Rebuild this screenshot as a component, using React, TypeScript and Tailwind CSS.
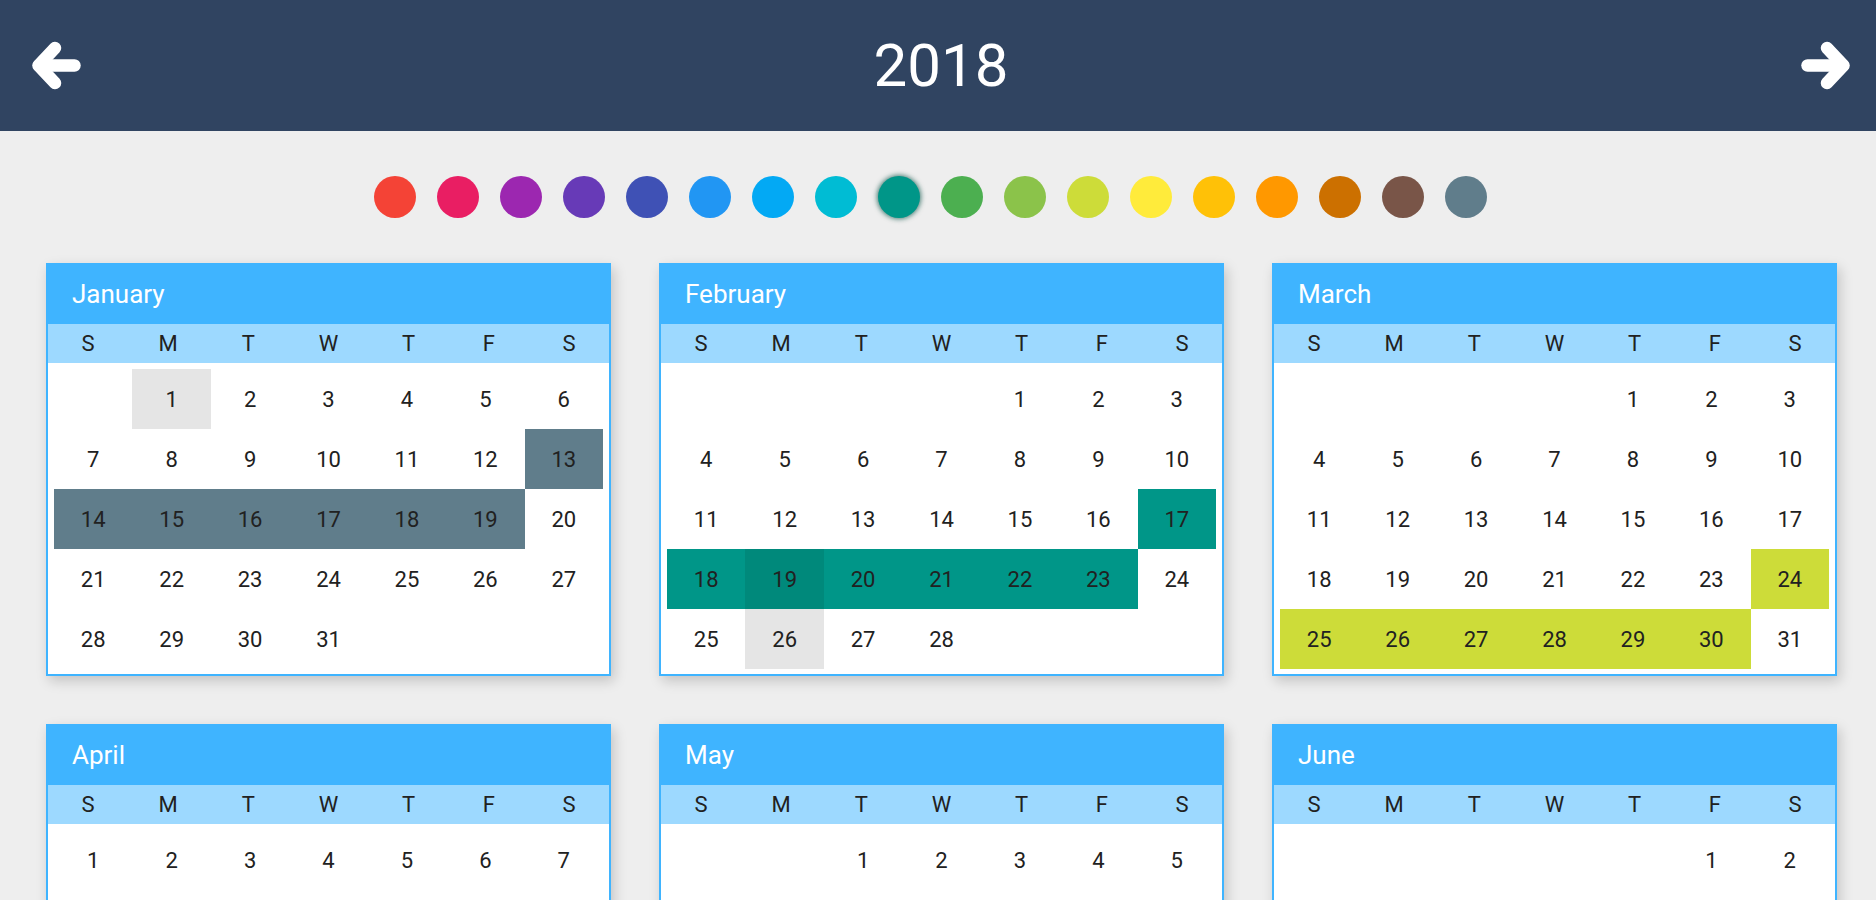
import React from "react";

const MONTHS = [
  "January", "February", "March", "April", "May", "June",
  "July", "August", "September", "October", "November", "December",
];
const WEEKDAYS = ["S", "M", "T", "W", "T", "F", "S"];

const SWATCHES = [
  "bg-[#f44336]", "bg-[#e91e63]", "bg-[#9c27b0]", "bg-[#673ab7]", "bg-[#3f51b5]",
  "bg-[#2196f3]", "bg-[#03a9f4]", "bg-[#00bcd4]", "bg-[#009688]", "bg-[#4caf50]",
  "bg-[#8bc34a]", "bg-[#cddc39]", "bg-[#ffeb3b]", "bg-[#ffc107]", "bg-[#ff9800]",
  "bg-[#cc7000]", "bg-[#795548]", "bg-[#607d8b]",
];

// month index -> day -> background class
const HIGHLIGHTS: Record<number, Record<number, string>> = {
  0: {
    1: "bg-[#e5e5e5]",
    13: "bg-[#607d8b]", 14: "bg-[#607d8b]", 15: "bg-[#607d8b]", 16: "bg-[#607d8b]",
    17: "bg-[#607d8b]", 18: "bg-[#607d8b]", 19: "bg-[#607d8b]",
  },
  1: {
    17: "bg-[#009688]", 18: "bg-[#009688]", 19: "bg-[#00897b]", 20: "bg-[#009688]",
    21: "bg-[#009688]", 22: "bg-[#009688]", 23: "bg-[#009688]",
    26: "bg-[#e5e5e5]",
  },
  2: {
    24: "bg-[#cddc39]", 25: "bg-[#cddc39]", 26: "bg-[#cddc39]", 27: "bg-[#cddc39]",
    28: "bg-[#cddc39]", 29: "bg-[#cddc39]", 30: "bg-[#cddc39]",
  },
};

function Arrow({ dir }: { dir: "left" | "right" }) {
  return (
    <svg
      width="50"
      height="54"
      viewBox="0 0 50 54"
      className={dir === "right" ? "-scale-x-100" : ""}
    >
      <g fill="none" stroke="white" strokeWidth="12.5" strokeLinecap="round" strokeLinejoin="round">
        <path d="M24 9 L7.5 26.5 L24 44" />
        <path d="M8 26.5 H43.5" />
      </g>
    </svg>
  );
}

function Month({ index }: { index: number }) {
  const first = new Date(2018, index, 1).getDay();
  const days = new Date(2018, index + 1, 0).getDate();
  const cells: (number | null)[] = [];
  for (let i = 0; i < first; i++) cells.push(null);
  for (let d = 1; d <= days; d++) cells.push(d);
  const marks = HIGHLIGHTS[index] || {};

  return (
    <div className="bg-white border-2 border-[#3fb4ff] shadow-[3px_5px_12px_rgba(0,0,0,0.18)]">
      <div className="h-[59px] bg-[#3fb4ff] flex items-center pl-[24px] text-[26px] text-white">
        {MONTHS[index]}
      </div>
      <div className="h-[39px] bg-[#9dd9ff] grid grid-cols-7 items-center text-center text-[22px] text-[#212121]">
        {WEEKDAYS.map((w, i) => (
          <div key={i}>{w}</div>
        ))}
      </div>
      <div className="grid grid-cols-7 px-[6px] pt-[6px] pb-[5px] text-[22px] text-[#212121]">
        {cells.map((d, i) => (
          <div
            key={i}
            className={`h-[60px] flex items-center justify-center ${d && marks[d] ? marks[d] : ""}`}
          >
            {d}
          </div>
        ))}
      </div>
    </div>
  );
}

export default function App() {
  return (
    <div className="h-screen overflow-hidden bg-[#eeeeee] font-['Roboto',sans-serif]">
      <header className="h-[131px] bg-[#304461] flex items-center justify-between pl-[31px] pr-[25px]">
        <Arrow dir="left" />
        <h1 className="text-[60px] text-white leading-none">2018</h1>
        <Arrow dir="right" />
      </header>

      <div className="flex justify-center gap-[21px] pr-[15px] pt-[45px]">
        {SWATCHES.map((c, i) => (
          <div
            key={i}
            className={`w-[42px] h-[42px] rounded-full ${c} ${
              i === 8 ? "shadow-[0_0_5px_1px_rgba(0,77,64,0.7)]" : ""
            }`}
          />
        ))}
      </div>

      <div className="grid grid-cols-3 gap-[48px] pl-[46px] pr-[39px] pt-[45px]">
        {MONTHS.map((_, i) => (
          <Month key={i} index={i} />
        ))}
      </div>
    </div>
  );
}
